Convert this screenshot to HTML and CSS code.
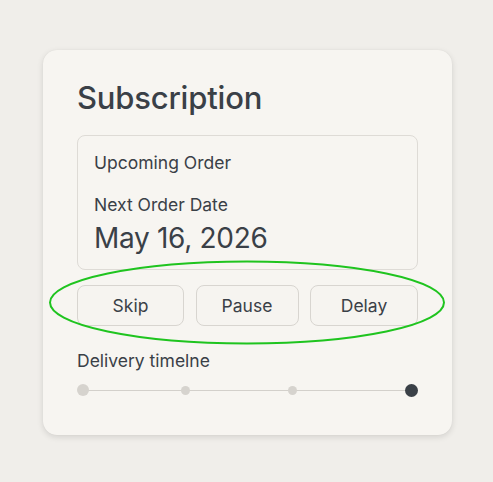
FILE: index.html
```html
<!DOCTYPE html>
<html>
<head>
<meta charset="utf-8">
<link rel="stylesheet" href="styles.css">
</head>
<body>
<div class="card">
  <h1 class="title">Subscription</h1>
  <div class="order">
    <div class="label">Upcoming Order</div>
    <div class="label next">Next Order Date</div>
    <div class="date">May 16, 2026</div>
  </div>
  <div class="actions">
    <button class="btn">Skip</button>
    <button class="btn">Pause</button>
    <button class="btn">Delay</button>
  </div>
  <svg class="ring" width="398" height="85" viewBox="0 0 398 85"><ellipse cx="199" cy="42.5" rx="197" ry="41" fill="none" stroke="#1fc41f" stroke-width="2"/></svg>
  <div class="timeline-label">Delivery timelne</div>
  <div class="timeline">
    <span class="dot big"></span>
    <span class="dot d2"></span>
    <span class="dot d3"></span>
    <span class="dot active"></span>
  </div>
</div>
</body>
</html>
```
FILE: styles.css
```css
html, body { margin: 0; padding: 0; }
body {
  background: #f0eeea;
  font-family: Inter, "Noto Sans", sans-serif;
  color: #3a4047;
  width: 493px;
  height: 482px;
  overflow: hidden;
}
.card {
  position: relative;
  margin: 50px 0 0 43px;
  width: 409px;
  height: 385px;
  box-sizing: border-box;
  padding: 30px 34px 0;
  background: #f7f5f1;
  border-radius: 14px;
  box-shadow: 0 2px 6px rgba(0,0,0,0.12), 0 0 1px rgba(0,0,0,0.08);
}
.title {
  margin: 0;
  font-size: 31px;
  line-height: 36px;
  font-weight: 500;
  letter-spacing: -0.2px;
}
.order {
  margin-top: 19px;
  height: 135px;
  box-sizing: border-box;
  border: 1px solid #dedbd6;
  border-radius: 8px;
  padding: 16px 16px 0;
}
.label {
  font-size: 17.5px;
  line-height: 22px;
}
.next { margin-top: 20px; }
.date {
  margin-top: 5px;
  font-size: 28px;
  line-height: 34px;
  font-weight: 400;
  letter-spacing: -0.3px;
}
.actions {
  margin-top: 15px;
  display: grid;
  grid-template-columns: 107px 103px 108px;
  justify-content: space-between;
}
.btn {
  height: 41px;
  border: 1px solid #d8d5d0;
  background: #f6f4f0;
  border-radius: 8px;
  font-family: inherit;
  font-size: 17.5px;
  color: #3a4047;
  padding: 0;
}
.ring {
  position: absolute;
  left: 5px;
  top: 210px;
}
.timeline-label {
  margin-top: 24px;
  font-size: 17.5px;
  line-height: 22px;
}
.timeline {
  margin-top: 11px;
  position: relative;
  display: flex;
  align-items: center;
  height: 14px;
}
.timeline::before {
  content: "";
  position: absolute;
  left: 6px; right: 6px; top: 7px;
  height: 1px;
  background: #d3d0cb;
}
.dot {
  position: relative;
  width: 9px; height: 9px;
  border-radius: 50%;
  background: #d6d3ce;
  flex: none;
}
.dot.big { width: 12px; height: 12px; }
.dot.d2 { margin-left: 92px; }
.dot.d3 { margin-left: 98px; }
.dot.active { margin-left: auto; width: 13px; height: 13px; background: #3a4047; }
```
